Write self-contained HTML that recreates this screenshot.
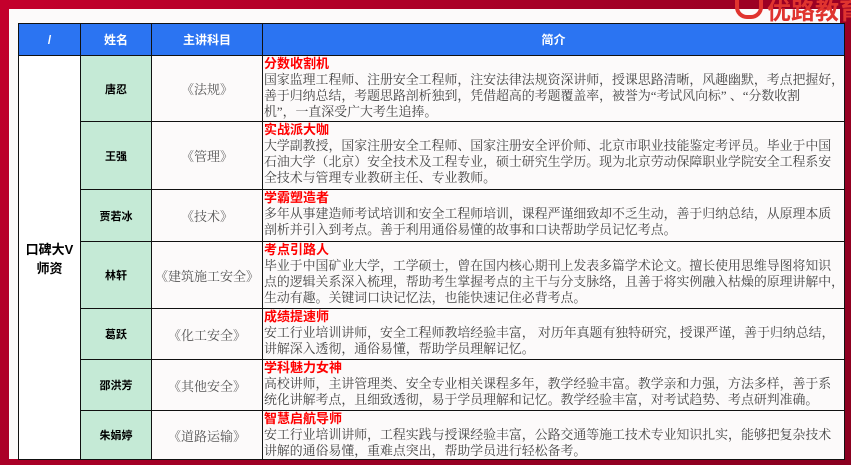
<!DOCTYPE html>
<html><head><meta charset="utf-8"><style>
html,body{margin:0;padding:0;}
body{width:851px;height:465px;overflow:hidden;background:linear-gradient(135deg,#c4002c,#a00025 50%,#8a0020);position:relative;font-family:"Liberation Sans","Noto Sans CJK SC",sans-serif;}
.panel{position:absolute;left:9px;top:9px;width:831px;height:450px;background:#fcfafa;}
.logo{position:absolute;left:735px;top:-9px;font:bold 24px "Liberation Sans","Noto Sans CJK SC",sans-serif;color:#e0342f;white-space:nowrap;}
.logo span{display:inline-block;width:20px;height:20px;border:4px solid #e0342f;border-radius:0 0 12px 12px;border-top:none;vertical-align:top;margin-top:4px;margin-right:4px;}
table{position:absolute;left:18px;top:23px;border-collapse:collapse;table-layout:fixed;}
td,th{border:1.3px solid #111;padding:0;}
th{background:#2b74f2;color:#fff;font-size:12px;font-weight:bold;height:31px;}
.n{background:#c5ead6;text-align:center;font-size:11px;font-weight:bold;color:#000;}
.s{text-align:center;font-size:13px;color:#555;font-family:"Liberation Serif","Noto Serif CJK SC",serif;background:#fcfafa;}
.d{font-family:"Liberation Serif","Noto Serif CJK SC",serif;font-size:12.9px;line-height:16px;color:#444;white-space:nowrap;overflow:hidden;padding-left:1px;vertical-align:top;background:#fcfafa;}
.d b{color:#f00;font-family:"Liberation Sans","Noto Sans CJK SC",sans-serif;font-size:13px;display:block;line-height:16px;}
.g{text-align:center;font-weight:bold;font-size:13px;color:#000;background:#fff;}
</style></head><body>
<div class="panel"></div>
<div class="logo"><span></span>优路教育</div>
<table>
<colgroup><col style="width:62px"><col style="width:71px"><col style="width:111px"><col style="width:569px"></colgroup>
<tr><th>/</th><th>姓名</th><th>主讲科目</th><th>简介</th></tr>
<tr style="height:66px"><td class="g" rowspan="7">口碑大V<br>师资</td><td class="n">唐忍</td><td class="s">《法规》</td><td class="d"><b>分数收割机</b>国家监理工程师、注册安全工程师，注安法律法规资深讲师，授课思路清晰，风趣幽默，考点把握好，<br>善于归纳总结，考题思路剖析独到，凭借超高的考题覆盖率，被誉为“考试风向标” 、“分数收割<br>机”，一直深受广大考生追捧。</td></tr>
<tr style="height:68px"><td class="n">王强</td><td class="s">《管理》</td><td class="d"><b>实战派大咖</b>大学副教授，国家注册安全工程师、国家注册安全评价师、北京市职业技能鉴定考评员。毕业于中国<br>石油大学（北京）安全技术及工程专业，硕士研究生学历。现为北京劳动保障职业学院安全工程系安<br>全技术与管理专业教研主任、专业教师。</td></tr>
<tr style="height:52px"><td class="n">贾若冰</td><td class="s">《技术》</td><td class="d"><b>学霸塑造者</b>多年从事建造师考试培训和安全工程师培训，课程严谨细致却不乏生动，善于归纳总结，从原理本质<br>剖析并引入到考点。善于利用通俗易懂的故事和口诀帮助学员记忆考点。</td></tr>
<tr style="height:67px"><td class="n">林轩</td><td class="s">《建筑施工安全》</td><td class="d"><b>考点引路人</b>毕业于中国矿业大学，工学硕士，曾在国内核心期刊上发表多篇学术论文。擅长使用思维导图将知识<br>点的逻辑关系深入梳理，帮助考生掌握考点的主干与分支脉络，且善于将实例融入枯燥的原理讲解中，<br>生动有趣。关键词口诀记忆法，也能快速记住必背考点。</td></tr>
<tr style="height:51px"><td class="n">葛跃</td><td class="s">《化工安全》</td><td class="d"><b>成绩提速师</b>安工行业培训讲师，安全工程师教培经验丰富， 对历年真题有独特研究，授课严谨，善于归纳总结，<br>讲解深入透彻，通俗易懂，帮助学员理解记忆。</td></tr>
<tr style="height:51px"><td class="n">邵洪芳</td><td class="s">《其他安全》</td><td class="d"><b>学科魅力女神</b>高校讲师，主讲管理类、安全专业相关课程多年，教学经验丰富。教学亲和力强，方法多样，善于系<br>统化讲解考点，且细致透彻，易于学员理解和记忆。教学经验丰富，对考试趋势、考点研判准确。</td></tr>
<tr style="height:47px"><td class="n">朱娟婷</td><td class="s">《道路运输》</td><td class="d"><b>智慧启航导师</b>安工行业培训讲师，工程实践与授课经验丰富，公路交通等施工技术专业知识扎实，能够把复杂技术<br>讲解的通俗易懂，重难点突出，帮助学员进行轻松备考。</td></tr>
</table>
</body></html>
